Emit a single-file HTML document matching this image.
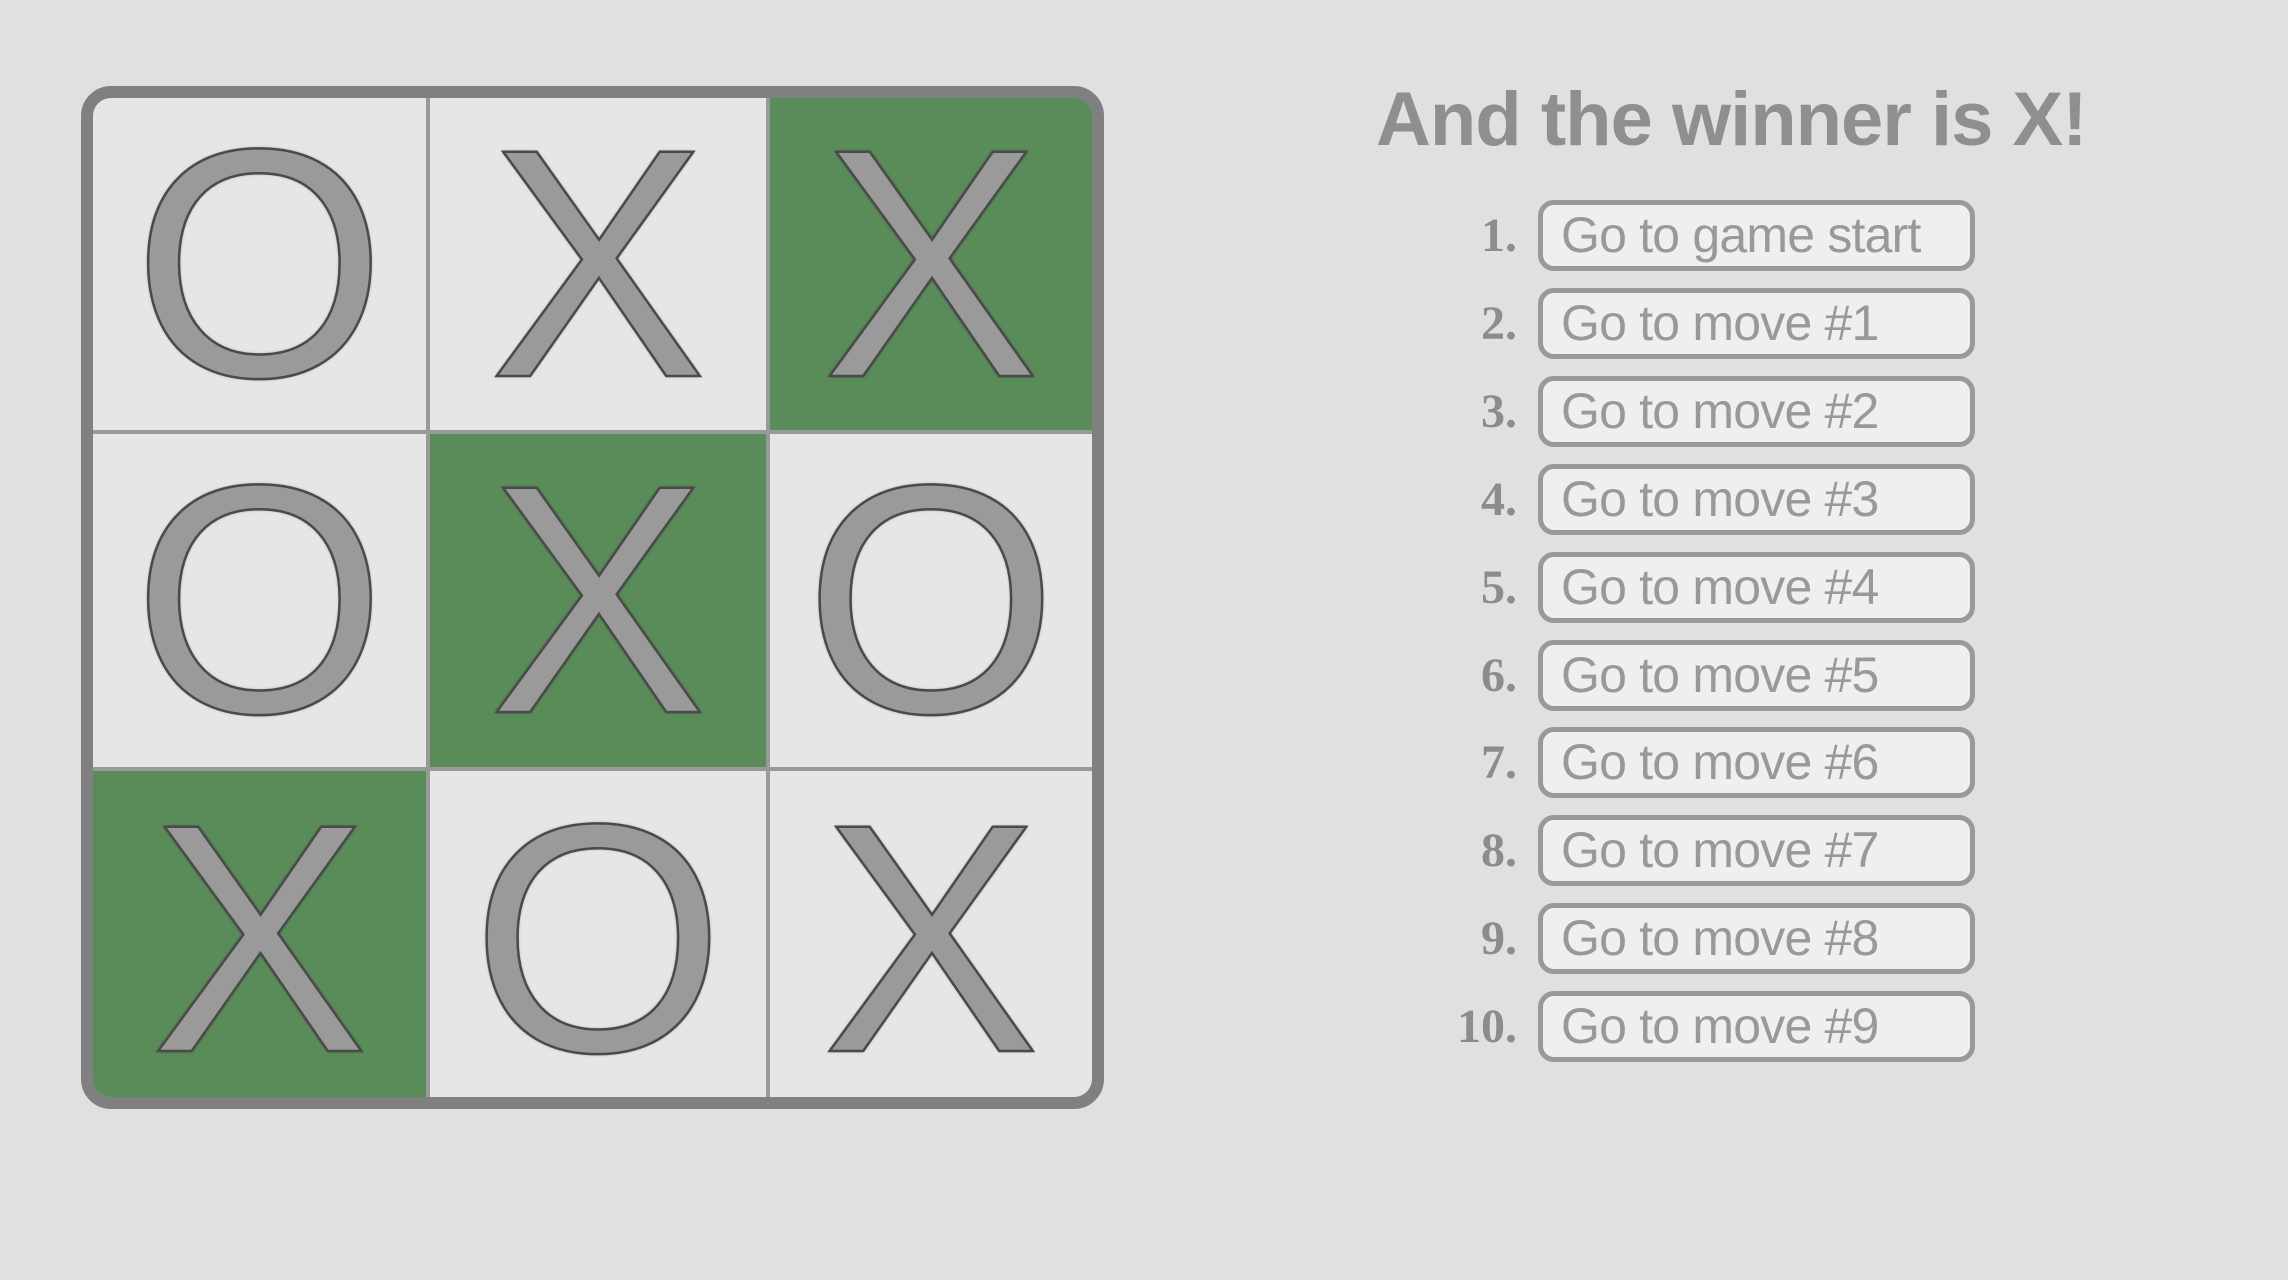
<!DOCTYPE html>
<html><head><meta charset="utf-8"><style>
html,body{margin:0;padding:0;background:#e0e0e0;width:2288px;height:1280px;overflow:hidden;font-family:"Liberation Sans",sans-serif;}
.board{position:absolute;left:81px;top:86px;width:999px;height:999px;border:12px solid #808080;border-radius:30px;background:#999;overflow:hidden;}
.cell{position:absolute;background:#e6e6e6;text-align:center;font-size:326px;color:#9a9a9a;-webkit-text-stroke:2.5px #4a4a4a;text-shadow:0 0 3px rgba(0,0,0,.55);}
.c1{left:0;width:333px}.c2{left:337px;width:336px}.c3{left:677px;width:322px}
.r1{top:0;height:332px;line-height:332px}.r2{top:336px;height:333px;line-height:333px}.r3{top:673px;height:326px;line-height:336px}
.g{background:#5a8c5a;}
h1{position:absolute;left:1376px;top:76px;margin:0;font-size:76px;font-weight:bold;color:#8f8f8f;white-space:nowrap;letter-spacing:-1px;}
.num{position:absolute;width:120px;text-align:right;font-family:"Liberation Serif",serif;font-weight:bold;font-size:48px;color:#8c8c8c;}
.btn{position:absolute;left:1538px;width:409px;height:61px;border:5px solid #999;border-radius:16px;background:#efefef;font-size:50px;color:#999;line-height:60px;padding-left:18px;letter-spacing:-0.8px;white-space:nowrap;}
</style></head><body>
<div class="board">
<div class="cell c1 r1">O</div>
<div class="cell c2 r1">X</div>
<div class="cell c3 r1 g">X</div>
<div class="cell c1 r2">O</div>
<div class="cell c2 r2 g">X</div>
<div class="cell c3 r2">O</div>
<div class="cell c1 r3 g">X</div>
<div class="cell c2 r3">O</div>
<div class="cell c3 r3">X</div>
</div>
<h1>And the winner is X!</h1>
<div class="num" style="top:208px;left:1397px">1.</div><div class="btn" style="top:200px">Go to game start</div>
<div class="num" style="top:296px;left:1397px">2.</div><div class="btn" style="top:288px">Go to move #1</div>
<div class="num" style="top:384px;left:1397px">3.</div><div class="btn" style="top:376px">Go to move #2</div>
<div class="num" style="top:472px;left:1397px">4.</div><div class="btn" style="top:464px">Go to move #3</div>
<div class="num" style="top:560px;left:1397px">5.</div><div class="btn" style="top:552px">Go to move #4</div>
<div class="num" style="top:648px;left:1397px">6.</div><div class="btn" style="top:640px">Go to move #5</div>
<div class="num" style="top:735px;left:1397px">7.</div><div class="btn" style="top:727px">Go to move #6</div>
<div class="num" style="top:823px;left:1397px">8.</div><div class="btn" style="top:815px">Go to move #7</div>
<div class="num" style="top:911px;left:1397px">9.</div><div class="btn" style="top:903px">Go to move #8</div>
<div class="num" style="top:999px;left:1397px">10.</div><div class="btn" style="top:991px">Go to move #9</div>
</body></html>
